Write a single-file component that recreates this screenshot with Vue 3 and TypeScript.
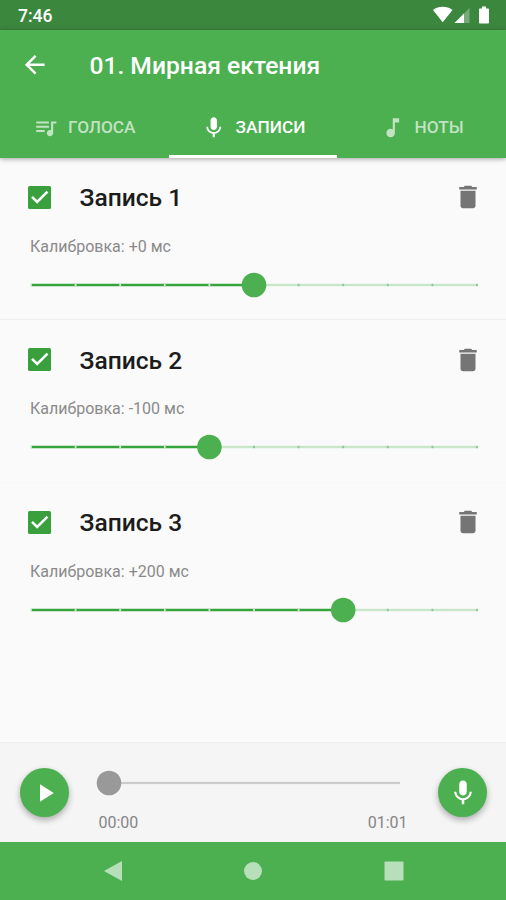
<script setup lang="ts">
import { ref } from 'vue'

interface Recording {
  id: number
  title: string
  offset: number
  enabled: boolean
}

const recordings = ref<Recording[]>([
  { id: 1, title: 'Запись 1', offset: 0, enabled: true },
  { id: 2, title: 'Запись 2', offset: -100, enabled: true },
  { id: 3, title: 'Запись 3', offset: 200, enabled: true },
])

const tabs = [
  {
    id: 'voices',
    label: 'ГОЛОСА',
    icon: 'M15 6H3v2h12V6zm0 4H3v2h12v-2zM3 16h8v-2H3v2zM17 6v8.180c-.31-.11-.65-.18-1-.18-1.660 0-3 1.340-3 3s1.340 3 3 3 3-1.340 3-3V8h3V6h-5z',
  },
  {
    id: 'records',
    label: 'ЗАПИСИ',
    icon: 'M12 14c1.660 0 2.990-1.340 2.990-3L15 5c0-1.660-1.340-3-3-3S9 3.340 9 5v6c0 1.660 1.340 3 3 3zm5.300-3c0 3-2.540 5.100-5.300 5.100S6.700 14 6.700 11H5c0 3.410 2.720 6.230 6 6.720V21h2v-3.280c3.280-.48 6-3.300 6-6.720h-1.700z',
  },
  {
    id: 'notes',
    label: 'НОТЫ',
    icon: 'M12 3v10.550c-.59-.34-1.270-.55-2-.55-2.210 0-4 1.790-4 4s1.790 4 4 4 4-1.790 4-4V7h4V3h-6z',
  },
]
const activeTab = ref('records')
const micPath = tabs[1].icon

const TRACK = 446
const STEP = TRACK / 10
const ticks = Array.from({ length: 11 }, (_, i) => i)

const position = (offset: number) => ((offset + 500) / 1000) * TRACK
const formatOffset = (offset: number) => (offset >= 0 ? `+${offset}` : `${offset}`)
const remove = (id: number) => {
  recordings.value = recordings.value.filter((r) => r.id !== id)
}
</script>

<template>
  <div class="screen">
    <div class="status">
      <span class="clock">7:46</span>
      <svg class="status-icons" width="58" height="20" viewBox="0 0 58 20">
        <path d="M1 5C6.500 .8 15 .8 20.500 5L10.700 17.200z" fill="#fff" />
        <path d="M37.500 3v15h-15z" fill="#fff" fill-opacity=".3" />
        <path d="M32 8.500v9.500h-9.500z" fill="#fff" />
        <path d="M47.800 3.500H50V1.600h4v1.900h2.200q.8 0 .8.8v13.400q0 .8-.8.8h-8.400q-.8 0-.8-.8V4.300q0-.8.8-.8z" fill="#fff" />
      </svg>
    </div>

    <header class="appbar">
      <div class="toolbar">
        <svg class="back" viewBox="0 0 24 24"><path d="M20 11H7.830l5.590-5.590L12 4l-8 8 8 8 1.410-1.410L7.830 13H20v-2z" /></svg>
        <h1>01. Мирная ектения</h1>
      </div>
      <nav class="tabs">
        <button
          v-for="tab in tabs"
          :key="tab.id"
          class="tab"
          :class="{ active: tab.id === activeTab }"
          @click="activeTab = tab.id"
        >
          <svg viewBox="0 0 24 24"><path :d="tab.icon" /></svg>
          <span>{{ tab.label }}</span>
        </button>
      </nav>
    </header>

    <main class="list">
      <section v-for="rec in recordings" :key="rec.id" class="record">
        <div class="head">
          <button class="check" @click="rec.enabled = !rec.enabled">
            <svg viewBox="0 0 23 23">
              <rect width="23" height="23" rx="1.500" />
              <path v-if="rec.enabled" d="M4 10.800l5.200 5.200L19.500 5.700" />
            </svg>
          </button>
          <h2>{{ rec.title }}</h2>
          <button class="trash" @click="remove(rec.id)">
            <svg viewBox="0 0 24 24"><path d="M6 19c0 1.100.9 2 2 2h8c1.100 0 2-.9 2-2V7H6v12zM19 4h-3.500l-1-1h-5l-1 1H5v2h14V4z" /></svg>
          </button>
        </div>
        <p class="calibration">Калибровка: {{ formatOffset(rec.offset) }} мс</p>
        <svg class="slider" width="472" height="26" viewBox="-13 -13 472 26">
          <rect class="rest" x="0" y="-1.200" :width="TRACK" height="2.400" />
          <rect class="filled" x="0" y="-1.200" :width="position(rec.offset)" height="2.400" />
          <rect
            v-for="i in ticks"
            :key="i"
            :class="i * STEP < position(rec.offset) ? 'tick-on' : 'tick-off'"
            :x="i * STEP - 0.9"
            y="-1.200"
            width="1.800"
            height="2.400"
          />
          <circle :cx="position(rec.offset)" cy="0" r="12.300" />
        </svg>
      </section>
    </main>

    <footer class="player">
      <button class="fab"><svg viewBox="0 0 24 24"><path d="M8 5v14l11-7z" /></svg></button>
      <div class="progress">
        <svg width="304" height="26" viewBox="-13 -13 304 26">
          <rect x="0" y="-1.100" width="291" height="2.200" fill="#cbcbcb" />
          <circle cx="0" cy="0" r="12.300" fill="#999" />
        </svg>
        <div class="times"><span>00:00</span><span>01:01</span></div>
      </div>
      <button class="fab"><svg viewBox="0 0 24 24"><path :d="micPath" /></svg></button>
    </footer>

    <div class="navbar">
      <svg viewBox="0 0 20 20"><path d="M19 0v20L1 10z" /></svg>
      <svg viewBox="0 0 20 20"><circle cx="10" cy="10" r="9" /></svg>
      <svg viewBox="0 0 20 20"><rect x=".5" y=".5" width="19" height="19" rx="1" /></svg>
    </div>
  </div>
</template>

<style>
body {
  margin: 0;
}
</style>

<style scoped>
.screen {
  display: flex;
  flex-direction: column;
  width: 506px;
  height: 900px;
  overflow: hidden;
  background: #fafafa;
  font-family: Roboto, 'Liberation Sans', sans-serif;
}
button {
  padding: 0;
  border: 0;
  background: none;
  font: inherit;
  color: inherit;
}
svg {
  display: block;
  flex: none;
}
h1,
h2,
p {
  margin: 0;
}
.status {
  display: flex;
  flex: none;
  justify-content: space-between;
  height: 30px;
  box-sizing: border-box;
  padding: 5px 16px 0 18px;
  background: #3b873e;
  color: #fff;
}
.clock {
  font-size: 17.500px;
  line-height: 22px;
  font-weight: 500;
}
.appbar {
  flex: none;
  height: 127.500px;
  background: #4caf50;
  color: #fff;
  box-shadow: 0 1px 5px rgba(0, 0, 0, 0.35);
  z-index: 1;
}
.toolbar {
  display: flex;
  align-items: center;
  gap: 40px;
  height: 69px;
  padding-left: 19.900px;
}
.back {
  width: 29.500px;
  height: 29.500px;
  fill: #fff;
}
h1 {
  padding-top: 2px;
  font-size: 24.650px;
  line-height: 30px;
  font-weight: 500;
  white-space: nowrap;
}
.tabs {
  display: grid;
  grid-template-columns: repeat(3, 1fr);
  height: 58.500px;
}
.tab {
  display: flex;
  align-items: center;
  justify-content: center;
  gap: 9.500px;
  box-sizing: border-box;
  padding-top: 1px;
  border-bottom: 3px solid transparent;
  font-size: 17.250px;
  font-weight: 500;
  color: rgba(255, 255, 255, 0.66);
}
.tab svg {
  width: 25.500px;
  height: 25.500px;
  fill: currentColor;
}
.tab.active {
  color: #fff;
  border-bottom-color: #fff;
}
.list {
  flex: 1;
}
.record {
  box-sizing: border-box;
  height: 162.500px;
  padding: 19.500px 18px 0 28px;
  border-bottom: 1px solid #f0f0f0;
}
.record:nth-child(2) {
  border-bottom-color: #f8f8f8;
}
.record:last-child {
  border-bottom: 0;
}
.head {
  display: flex;
  align-items: center;
  height: 41px;
}
.check svg {
  width: 23px;
  height: 23px;
  margin-top: -1px;
}
.check rect {
  fill: #3aa03e;
}
.check path {
  fill: none;
  stroke: #fff;
  stroke-width: 2.500;
}
h2 {
  flex: 1;
  margin-left: 28.500px;
  padding-top: 1.500px;
  font-size: 24.600px;
  line-height: 30px;
  font-weight: 500;
  color: #1c1c1c;
}
.trash {
  margin-right: 5.500px;
}
.trash svg {
  width: 30px;
  height: 30px;
  margin-top: -1px;
  fill: #757575;
}
.calibration {
  margin: 17.500px 0 0 2px;
  font-size: 16px;
  line-height: 22px;
  color: #8a8a8a;
}
.slider {
  margin: 14px 0 0 -10.500px;
}
.rest {
  fill: #c8e6c9;
}
.filled {
  fill: #35a43a;
}
.tick-on {
  fill: #d3ecd4;
}
.tick-off {
  fill: #8bc78e;
}
.slider circle {
  fill: #4caf50;
}
.player {
  display: flex;
  flex: none;
  justify-content: space-between;
  height: 100px;
  box-sizing: border-box;
  padding: 25px 19px 0 20px;
  border-top: 1px solid #efefef;
  background: #f5f5f5;
}
.fab {
  display: flex;
  align-items: center;
  justify-content: center;
  width: 49px;
  height: 49px;
  border-radius: 50%;
  background: #4caf50;
  box-shadow: 0 3px 6px rgba(0, 0, 0, 0.3);
}
.fab svg {
  width: 30px;
  height: 30px;
  fill: #fff;
}
.progress {
  width: 317px;
  margin-left: 1px;
}
.progress svg {
  margin-top: 2px;
}
.times {
  display: flex;
  justify-content: space-between;
  padding: 16px 5px 0 3px;
  font-size: 16px;
  line-height: 22px;
  color: #858585;
}
.navbar {
  display: flex;
  flex: none;
  align-items: center;
  justify-content: space-between;
  height: 58px;
  box-sizing: border-box;
  padding: 0 102.500px;
  background: #4caf50;
}
.navbar svg {
  width: 20px;
  height: 20px;
  fill: #b7dfb9;
}
</style>
